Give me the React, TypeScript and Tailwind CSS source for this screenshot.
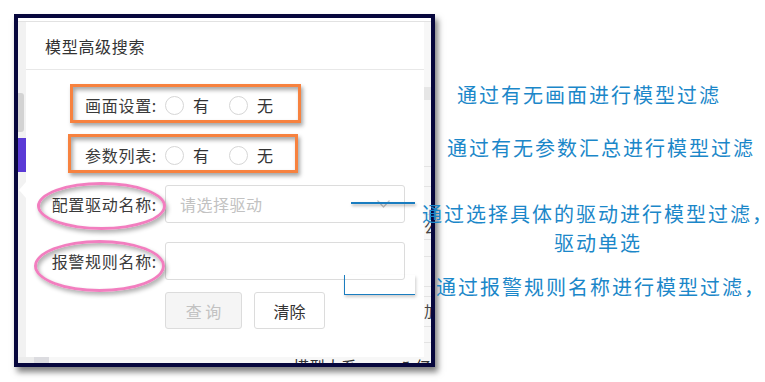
import React from "react";

const Radio = ({ label, first }: { label: string; first?: boolean }) => (
  <div className={`flex items-center ${first ? "" : "ml-[20px]"}`}>
    <span className="w-[19px] h-[19px] rounded-full border border-[#d6d6d6] bg-white" />
    <span className="ml-[9px] text-[16px] text-[#333]">{label}</span>
  </div>
);

const Label = ({ text }: { text: string }) => (
  <div className="w-[139px] shrink-0 text-right pr-[8px] text-[16px] tracking-[0.7px] text-[#3a3a3a] leading-[20px]">
    {text}
  </div>
);

export default function App() {
  return (
    <div className="relative w-[765px] h-[382px] bg-white overflow-hidden font-['Noto_Sans_CJK_SC','Noto_Sans',sans-serif] pl-[14px] pt-[14px]">
      {/* framed screenshot */}
      <div className="w-[421px] h-[353px] border-4 border-[#07073d] bg-white flex flex-col shadow-[3px_5px_6px_rgba(0,0,0,0.5)]">
        <div className="h-[4px] border-b border-[#e2e2e2] bg-white shrink-0" />
        <div className="flex h-[335px] shrink-0">
          {/* left strip */}
          <div className="w-[8px] bg-[#f2f2f2] flex flex-col shrink-0">
            <div className="h-[71px]" />
            <div className="w-[6px] h-[39px] bg-[#d3d3d3] rounded-r-[3px]" />
            <div className="h-[6px]" />
            <div className="h-[34px] bg-[#5a3ad6]" />
          </div>
          {/* dialog */}
          <div className="relative w-[398px] bg-white flex flex-col shrink-0">
            <div className="absolute left-[-7px] top-[160px] w-0 h-0 border-y-[8px] border-y-transparent border-r-[7px] border-r-white" />
            <div className="h-[48px] border-b border-[#e8e8e8] flex items-center pl-[19px] text-[16px] tracking-[0.7px] text-[#333]">
              模型高级搜索
            </div>
            <div className="h-[38px] mt-[16px] flex items-center">
              <Label text="画面设置:" />
              <Radio label="有" first />
              <Radio label="无" />
            </div>
            <div className="h-[38px] mt-[12px] flex items-center">
              <Label text="参数列表:" />
              <Radio label="有" first />
              <Radio label="无" />
            </div>
            <div className="h-[38px] mt-[11px] flex items-center">
              <Label text="配置驱动名称:" />
              <div className="w-[240px] h-[38px] border border-[#dcdcdc] rounded-[3px] flex items-center justify-between pl-[14px] pr-[14px]">
                <span className="text-[16px] tracking-[0.5px] text-[#c2c2c2]">请选择驱动</span>
                <svg width="13" height="8" viewBox="0 0 13 8">
                  <polyline points="0.5,0.5 6.5,7 12.5,0.5" fill="none" stroke="#c4c4c4" strokeWidth="1.2" />
                </svg>
              </div>
            </div>
            <div className="h-[38px] mt-[19px] flex items-center">
              <Label text="报警规则名称:" />
              <div className="w-[240px] h-[38px] border border-[#dcdcdc] rounded-[3px]" />
            </div>
            <div className="h-[37px] mt-[12px] flex items-center pl-[139px]">
              <div className="w-[77px] h-[37px] border border-[#dcdcdc] rounded-[3px] bg-[#f5f5f5] flex items-center justify-center text-[16px] text-[#c2c2c2]">
                查&nbsp;询
              </div>
              <div className="ml-[12px] w-[71px] h-[37px] border border-[#dcdcdc] rounded-[3px] bg-white flex items-center justify-center text-[16px] text-[#333]">
                清除
              </div>
            </div>
          </div>
          {/* right strip */}
          <div className="w-[7px] bg-[#f7f7f7] flex flex-col shrink-0 overflow-hidden">
            <div className="h-[65px]" />
            <div className="h-[13px] bg-[#e6e6e6]" />
            <div className="h-[67px] border-b border-[#e3e3e3]" />
            <div className="h-[20px] border-b border-[#e3e3e3]" />
            <div className="h-[28px] border-b border-[#e3e3e3]" />
            <div className="h-[25px] border-b border-[#e3e3e3] text-[15px] leading-[24px] text-[#444] whitespace-nowrap">公</div>
            <div className="h-[17px] border-b border-[#e3e3e3]" />
            <div className="h-[30px] border-b border-[#e3e3e3]" />
            <div className="h-[10px] border-b border-[#e3e3e3]" />
            <div className="h-[30px] border-b border-[#e3e3e3] text-[15px] leading-[28px] text-[#444] whitespace-nowrap">加</div>
            <div className="h-[16px] border-b border-[#e3e3e3]" />
          </div>
        </div>
        <div className="h-[6px] flex bg-[#f7f7f7] overflow-hidden shrink-0">
          <div className="w-[16px] bg-[#ececec]" />
          <div className="w-[15px] bg-[#dcdce0]" />
          <div className="w-[246px]" />
          <div className="text-[16px] leading-[18px] text-[#333] whitespace-nowrap">模型大系:</div>
          <div className="ml-[34px] text-[16px] leading-[18px] text-[#333] whitespace-nowrap">↗ 亿</div>
        </div>
      </div>

      {/* annotation overlays: orange boxes */}
      <div className="absolute left-[70px] top-[84px] w-[231px] h-[39px] border-[3px] border-[#f7823f] shadow-[2px_3px_4px_rgba(0,0,0,0.35),inset_2px_3px_4px_rgba(0,0,0,0.35)]" />
      <div className="absolute left-[68px] top-[134px] w-[230px] h-[39px] border-[3px] border-[#f7823f] shadow-[2px_3px_4px_rgba(0,0,0,0.35),inset_2px_3px_4px_rgba(0,0,0,0.35)]" />

      {/* pink ellipses */}
      <div className="absolute left-[37px] top-[182px] w-[129px] h-[48px] rounded-[50%] border-[3px] border-[#f27ebf] shadow-[2px_3px_4px_rgba(0,0,0,0.3),inset_2px_3px_4px_rgba(0,0,0,0.3)]" />
      <div className="absolute left-[34px] top-[240px] w-[131px] h-[52px] rounded-[50%] border-[3px] border-[#f27ebf] shadow-[2px_3px_4px_rgba(0,0,0,0.3),inset_2px_3px_4px_rgba(0,0,0,0.3)]" />

      {/* blue connector lines */}
      <div className="absolute left-[351px] top-[202px] w-[64px] h-[1.5px] bg-[#1a7dc0] shadow-[1px_2px_3px_rgba(0,0,0,0.3)]" />
      <div className="absolute left-[344px] top-[275px] w-[71px] h-[20px] border-l-[1.5px] border-b-[1.5px] border-[#1a7dc0] shadow-[1px_2px_3px_rgba(0,0,0,0.2)]" />

      {/* annotation texts */}
      <div className="absolute left-[457px] top-[83px] text-[20px] leading-[24px] tracking-[2px] text-[#1b87c9] whitespace-nowrap">
        通过有无画面进行模型过滤
      </div>
      <div className="absolute left-[447px] top-[136px] text-[20px] leading-[24px] tracking-[2px] text-[#1b87c9] whitespace-nowrap">
        通过有无参数汇总进行模型过滤
      </div>
      <div className="absolute left-[422px] top-[199px] w-[352px] text-center text-[20px] leading-[29px] tracking-[2px] text-[#1b87c9] whitespace-nowrap">
        <div>通过选择具体的驱动进行模型过滤，</div>
        <div>驱动单选</div>
      </div>
      <div className="absolute left-[436px] top-[275px] text-[20px] leading-[24px] tracking-[2px] text-[#1b87c9] whitespace-nowrap">
        通过报警规则名称进行模型过滤，
      </div>
    </div>
  );
}
